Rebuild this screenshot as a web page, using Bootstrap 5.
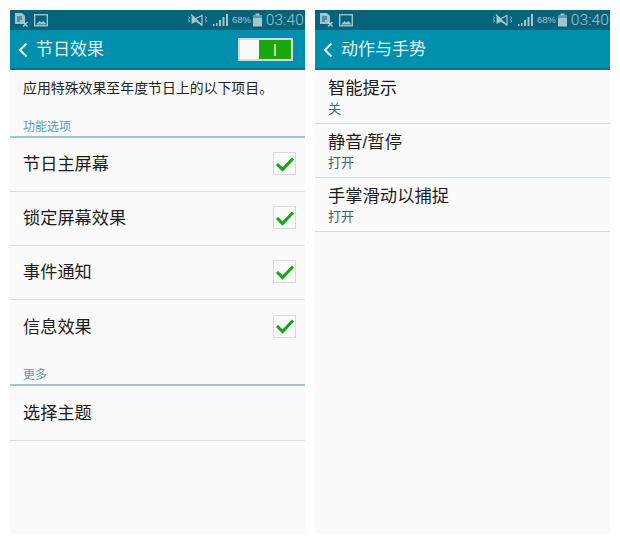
<!doctype html>
<html lang="zh">
<head>
<meta charset="utf-8">
<title>设置</title>
<link href="https://cdn.jsdelivr.net/npm/bootstrap@5.3.0/dist/css/bootstrap.min.css" rel="stylesheet">
<style>
html,body{height:544px;overflow:hidden;background:#fff}
body{font-family:"Liberation Sans","Noto Sans CJK SC",sans-serif;color:#1c1c1c}
.stage{padding:10px;gap:10px;height:544px}
.phone{width:295px;height:524px;background:#fafafa;flex:none}
.statusline{height:20px;background:#05637c;padding:0 1px 0 5px;color:#9fc2cc}
.clock{font-size:15.5px;line-height:20px;letter-spacing:.1px;color:#a5c6d0;font-family:"Roboto",sans-serif;font-weight:300;margin-left:3px}
.pct{font-size:9.4px;color:#a5c6d0;margin:0 1px 0 4px}
.appbar{height:40px;background:#0090ad;border-bottom:2px solid #0a7188;padding:1px 12px 0 8px;color:#e3f3f6}
.apptitle{font-size:17px;margin-left:8px;line-height:1}
.switchbox{width:55px;height:23px;border:2px solid #d3dadd;background:#fafafa;padding:0}
.switchon{width:32px;background:#1aa70f;margin-left:auto}
.switchon i{display:block;width:2.5px;height:12px;background:#b9e58a}
.intro{font-size:13.9px;height:37px;padding:9px 13px 0;line-height:18px;color:#222}
.seclabel{font-size:12px;color:#5b9aa8;padding:0 13px;line-height:14px}
.seclabel.first{margin-top:12px;height:17px;padding-top:1px}
.seclabel.next{margin-top:14px;height:16px}
.secrule{height:2px;background:#a8c2cb}
.setrow{height:54px;border-bottom:1.5px solid #d8dcdf;padding:1px 9px 0 13px;font-size:17.2px;color:#1c1c1c}
.tick{width:23px;height:23px;border:1.5px solid #d6dcdc;background:#fbfbfb;margin-top:-3px}
.setrow.tall{height:55px}
.subrow{height:54px;border-bottom:1.5px solid #cfdbe6;padding:8px 13px 0;}
.subtitle{font-size:17.3px;line-height:20px;color:#1c1c1c}
.subvalue{font-size:13px;line-height:16px;margin-top:3px;color:#3f6274}
</style>
</head>
<body class="m-0">
<div class="stage d-flex">
  <section class="phone d-flex flex-column">
    <div class="statusline d-flex align-items-center">
      <svg width="38" height="16" viewBox="0 0 38 16" fill="none"><path d="M0 1h7l3 3v8H0z" fill="#9fc2cc"/><path d="M2 5h5M2 7h5M2 9h3" stroke="#05637c"/><path d="M8 10l4.500 4.500M12.500 10L8 14.500" stroke="#b8d3da" stroke-width="1.200"/><rect x="19.700" y="2.700" width="12.600" height="11" stroke="#9fc2cc" stroke-width="1.400"/><path d="M21 12.500l3.500-3.500 2 1.500 2-1.500 3 3.500z" fill="#9fc2cc"/></svg>
      <div class="ms-auto d-flex align-items-center">
        <svg width="22" height="14" viewBox="0 0 20 14" fill="none" stroke="#a5c6d0"><path d="M.5 3.500l1 1.500-1 1.500 1 1.500-1 1.500" stroke-width=".9"/><path d="M3.500 3v8l5-2.500V5.500z" fill="#a5c6d0" stroke="none"/><path d="M3 1.500l11 11" stroke-width="1.300"/><path d="M8 5.500l6-3v9l-6-3" stroke-width="1.200"/><path d="M17.500 3.500l1 1.500-1 1.500 1 1.500-1 1.500" stroke-width=".9"/></svg>
        <svg class="ms-1" width="15" height="14" viewBox="0 0 15 14" fill="#a5c6d0"><rect x="0" y="11" width="1.500" height="2"/><rect x="3" y="10" width="1.500" height="3"/><rect x="6" y="7" width="2" height="6"/><rect x="9.500" y="4" width="2" height="9"/><rect x="13" y="1" width="2" height="12"/></svg>
        <span class="pct">68%</span>
        <svg width="11" height="14" viewBox="0 0 11 14" fill="#a5c6d0"><rect x="3.500" y="0.500" width="4" height="2"/><rect x="1" y="2" width="9" height="3" opacity=".55"/><rect x="1" y="5" width="9" height="8.500"/></svg>
        <span class="clock">03:40</span>
      </div>
    </div>
    <header class="appbar d-flex align-items-center">
      <svg width="10" height="16" viewBox="0 0 10 16" fill="none" stroke="#eaf6f8" stroke-width="2"><path d="M8.500 1.500L2 8l6.500 6.500"/></svg>
      <span class="apptitle">节日效果</span>
      <div class="switchbox d-flex ms-auto">
        <div class="switchon d-flex align-items-center justify-content-center"><i></i></div>
      </div>
    </header>
    <div class="intro">应用特殊效果至年度节日上的以下项目。</div>
    <div class="seclabel first">功能选项</div>
    <div class="secrule"></div>
    <div class="setrow d-flex align-items-center justify-content-between">节日主屏幕
      <span class="tick d-flex align-items-center justify-content-center"><svg width="20" height="16" viewBox="0 0 20 16" fill="none" stroke="#12a516" stroke-width="3"><path d="M2 8l5.500 5.500L18 2.500"/></svg></span></div>
    <div class="setrow d-flex align-items-center justify-content-between">锁定屏幕效果
      <span class="tick d-flex align-items-center justify-content-center"><svg width="20" height="16" viewBox="0 0 20 16" fill="none" stroke="#12a516" stroke-width="3"><path d="M2 8l5.500 5.500L18 2.500"/></svg></span></div>
    <div class="setrow d-flex align-items-center justify-content-between">事件通知
      <span class="tick d-flex align-items-center justify-content-center"><svg width="20" height="16" viewBox="0 0 20 16" fill="none" stroke="#12a516" stroke-width="3"><path d="M2 8l5.500 5.500L18 2.500"/></svg></span></div>
    <div class="setrow border-0 d-flex align-items-center justify-content-between">信息效果
      <span class="tick d-flex align-items-center justify-content-center"><svg width="20" height="16" viewBox="0 0 20 16" fill="none" stroke="#12a516" stroke-width="3"><path d="M2 8l5.500 5.500L18 2.500"/></svg></span></div>
    <div class="seclabel next">更多</div>
    <div class="secrule"></div>
    <div class="setrow tall d-flex align-items-center">选择主题</div>
  </section>
  <section class="phone d-flex flex-column">
    <div class="statusline d-flex align-items-center">
      <svg width="38" height="16" viewBox="0 0 38 16" fill="none"><path d="M0 1h7l3 3v8H0z" fill="#9fc2cc"/><path d="M2 5h5M2 7h5M2 9h3" stroke="#05637c"/><path d="M8 10l4.500 4.500M12.500 10L8 14.500" stroke="#b8d3da" stroke-width="1.200"/><rect x="19.700" y="2.700" width="12.600" height="11" stroke="#9fc2cc" stroke-width="1.400"/><path d="M21 12.500l3.500-3.500 2 1.500 2-1.500 3 3.500z" fill="#9fc2cc"/></svg>
      <div class="ms-auto d-flex align-items-center">
        <svg width="22" height="14" viewBox="0 0 20 14" fill="none" stroke="#a5c6d0"><path d="M.5 3.500l1 1.500-1 1.500 1 1.500-1 1.500" stroke-width=".9"/><path d="M3.500 3v8l5-2.500V5.500z" fill="#a5c6d0" stroke="none"/><path d="M3 1.500l11 11" stroke-width="1.300"/><path d="M8 5.500l6-3v9l-6-3" stroke-width="1.200"/><path d="M17.500 3.500l1 1.500-1 1.500 1 1.500-1 1.500" stroke-width=".9"/></svg>
        <svg class="ms-1" width="15" height="14" viewBox="0 0 15 14" fill="#a5c6d0"><rect x="0" y="11" width="1.500" height="2"/><rect x="3" y="10" width="1.500" height="3"/><rect x="6" y="7" width="2" height="6"/><rect x="9.500" y="4" width="2" height="9"/><rect x="13" y="1" width="2" height="12"/></svg>
        <span class="pct">68%</span>
        <svg width="11" height="14" viewBox="0 0 11 14" fill="#a5c6d0"><rect x="3.500" y="0.500" width="4" height="2"/><rect x="1" y="2" width="9" height="3" opacity=".55"/><rect x="1" y="5" width="9" height="8.500"/></svg>
        <span class="clock">03:40</span>
      </div>
    </div>
    <header class="appbar d-flex align-items-center">
      <svg width="10" height="16" viewBox="0 0 10 16" fill="none" stroke="#eaf6f8" stroke-width="2"><path d="M8.500 1.500L2 8l6.500 6.500"/></svg>
      <span class="apptitle">动作与手势</span>
    </header>
    <div class="subrow"><div class="subtitle">智能提示</div><div class="subvalue">关</div></div>
    <div class="subrow"><div class="subtitle">静音/暂停</div><div class="subvalue">打开</div></div>
    <div class="subrow"><div class="subtitle">手掌滑动以捕捉</div><div class="subvalue">打开</div></div>
  </section>
</div>
</body>
</html>
